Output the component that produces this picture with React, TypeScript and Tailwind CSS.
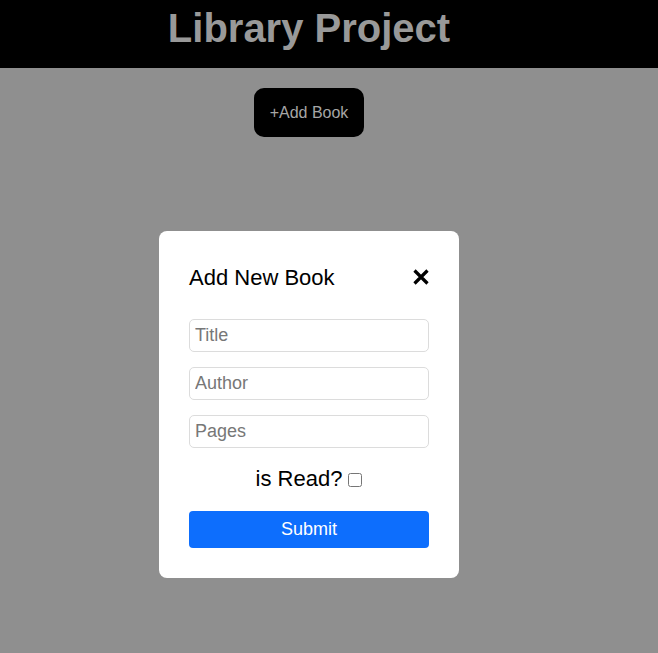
import { useState } from "react";

export default function App() {
  const [isRead, setIsRead] = useState(false);

  return (
    <div className="min-h-screen w-full bg-[#8f8f8f] font-['Liberation_Sans',Arial,sans-serif]">
      <header className="h-[68px] w-full bg-black">
        <div className="w-[618px] h-full flex items-center justify-center pb-[12px]">
          <h1 className="text-[40px] font-bold text-[#999999] leading-none">Library Project</h1>
        </div>
      </header>
      <div className="w-[618px] flex flex-col items-center">
        <button className="mt-5 h-[49px] px-[16px] rounded-[10px] bg-black text-[#a6a6a6] text-base">
          +Add Book
        </button>
        <div className="mt-[94px] w-[300px] bg-white rounded-lg p-[30px] flex flex-col">
          <div className="flex items-center justify-between h-[32px]">
            <span className="text-[22px] text-black">Add New Book</span>
            <svg width="18" height="18" viewBox="0 0 18 18" className="mr-[-1px]">
              <path d="M2.5 2.5 L15.5 15.5 M15.5 2.5 L2.5 15.5" stroke="black" strokeWidth="3.2" strokeLinecap="butt" />
            </svg>
          </div>
          <div className="mt-[26px] flex flex-col gap-[15px]">
            {["Title", "Author", "Pages"].map((p) => (
              <input
                key={p}
                placeholder={p}
                className="h-[33px] w-full border border-[#dcdcdc] rounded-[5px] px-[5px] text-[18px] placeholder:text-[#777777] outline-none"
              />
            ))}
          </div>
          <label className="mt-[19px] h-[23px] flex items-center justify-center gap-[6px] text-[22px] text-black">
            is Read?
            <input type="checkbox" checked={isRead} onChange={() => setIsRead(!isRead)} className="w-[14px] h-[14px] mt-[2px]" />
          </label>
          <button className="mt-[21px] h-[37px] w-full rounded-[4px] bg-[#0d6efd] text-white text-[18px]">
            Submit
          </button>
        </div>
      </div>
    </div>
  );
}
